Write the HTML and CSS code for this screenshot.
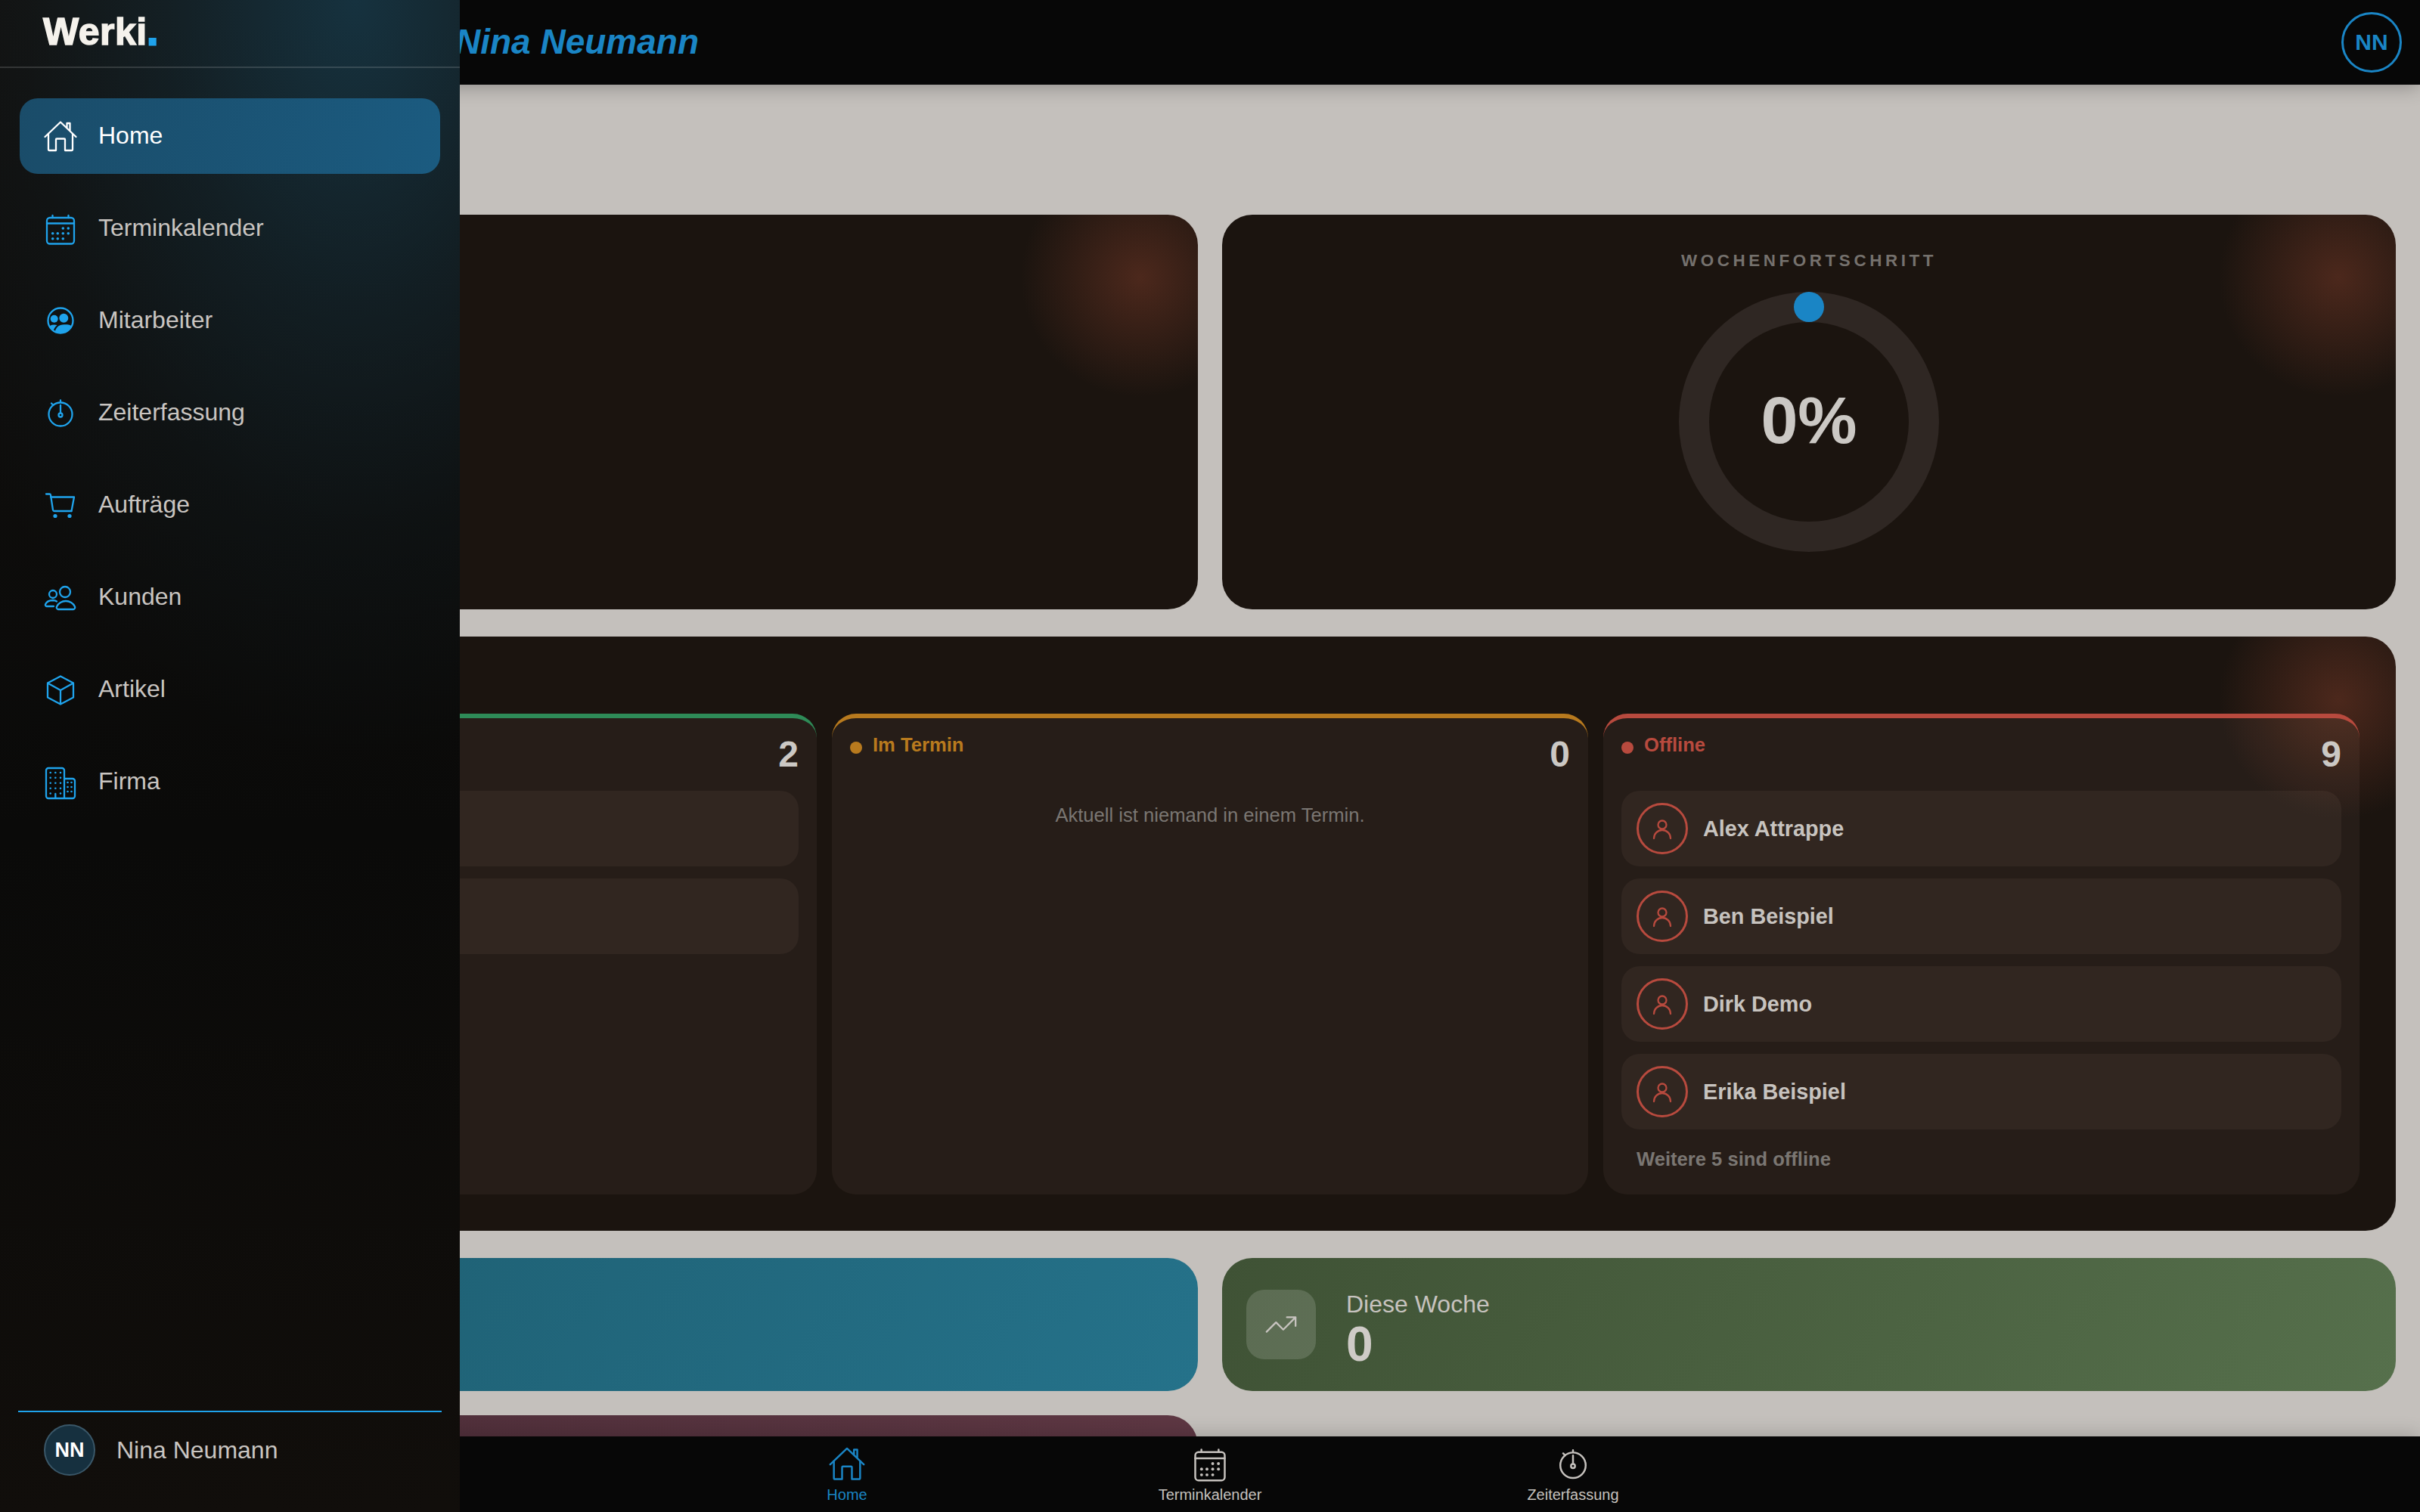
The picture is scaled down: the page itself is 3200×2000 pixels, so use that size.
FILE: index.html
```html
<!DOCTYPE html>
<html lang="de">
<head>
  <meta charset="UTF-8">
  <meta name="viewport" content="width=device-width, initial-scale=1.0">
  <title>Werki</title>
  <link rel="stylesheet" href="styles.css">
</head>
<body>
  <!-- Icons -->
  <svg class="icon-defs" aria-hidden="true">
    <symbol id="i-home" viewBox="0 0 48 48">
      <path d="M3.500 25 24 5.500 44.500 25M32.500 13.500V7h4v10"/>
      <path d="M8 21v20.500A1.500 1.500 0 0 0 9.500 43H18V28.500a1 1 0 0 1 1-1h10a1 1 0 0 1 1 1V43h8.500a1.500 1.500 0 0 0 1.500-1.500V21"/>
    </symbol>
    <symbol id="i-calendar" viewBox="0 0 48 48">
      <rect x="6" y="10" width="36" height="34.500" rx="4"/>
      <path d="M6 17.500h36M13.500 7v3M34.500 7v3"/>
      <g class="dots">
        <circle cx="27.300" cy="24" r="1.800"/><circle cx="34.300" cy="24" r="1.800"/>
        <circle cx="13.700" cy="30.700" r="1.800"/><circle cx="20.300" cy="30.700" r="1.800"/><circle cx="27.300" cy="30.700" r="1.800"/><circle cx="34.300" cy="30.700" r="1.800"/>
        <circle cx="13.700" cy="37.700" r="1.800"/><circle cx="20.300" cy="37.700" r="1.800"/><circle cx="27.300" cy="37.700" r="1.800"/>
      </g>
    </symbol>
    <symbol id="i-team" viewBox="0 0 48 48">
      <circle cx="24" cy="24" r="16.500"/>
      <g class="dots">
        <circle cx="15.700" cy="21.700" r="5"/><circle cx="28.300" cy="20.700" r="6"/>
        <path d="M9.800 31Q14 28.800 19.500 30 16 33 14.500 37A16 16 0 0 1 9.800 31Z"/>
        <path d="M17 38.500Q18 32 24 30 26 29.300 29 29.300H33Q36 29.300 38.500 31A16 16 0 0 1 17 38.500Z"/>
      </g>
    </symbol>
    <symbol id="i-watch" viewBox="0 0 48 48">
      <circle cx="24" cy="26" r="15.500"/>
      <path d="M24 10V7.500M12 11.500l2.500 2.500M24 14v10"/>
      <circle cx="24" cy="27" r="2.500"/>
    </symbol>
    <symbol id="i-cart" viewBox="0 0 48 48">
      <path d="M5 9.500h4.500a1.500 1.500 0 0 1 1.500 1.300L14 30.500a2 2 0 0 0 2 1.500h22.500"/>
      <path d="M11 13.500h31L38.500 32"/>
      <g class="dots"><circle cx="17" cy="38.500" r="2.600"/><circle cx="36" cy="38.500" r="2.600"/></g>
    </symbol>
    <symbol id="i-people" viewBox="0 0 48 48">
      <circle cx="14" cy="20" r="5"/>
      <circle cx="30" cy="17" r="7"/>
      <path d="M21 40h20a2.500 2.500 0 0 0 2-3.500C41 32 36 29 31 29s-10 3-12 7.500a2.500 2.500 0 0 0 2 3.500Z"/>
      <path d="M15 36H6a2 2 0 0 1-2-2.500C5.500 30 9 28 14 28a10 10 0 0 1 5 1.500"/>
    </symbol>
    <symbol id="i-box" viewBox="0 0 48 48">
      <path d="M24 6.500 41 15.500v19L24 43.500 7 34.500v-19ZM7 15.500 24 25l17-9.500M24 25v18.500"/>
    </symbol>
    <symbol id="i-company" viewBox="0 0 48 48">
      <path d="M29 46H8a3 3 0 0 1-3-3V9a3 3 0 0 1 3-3h18a3 3 0 0 1 3 3v37ZM29 20h11a3 3 0 0 1 3 3v20a3 3 0 0 1-3 3H29M17.300 46v-6"/>
      <g class="dots">
        <circle cx="10.700" cy="12" r="1.300"/><circle cx="17.300" cy="12" r="1.300"/><circle cx="24" cy="12" r="1.300"/>
        <circle cx="10.700" cy="18.700" r="1.300"/><circle cx="17.300" cy="18.700" r="1.300"/><circle cx="24" cy="18.700" r="1.300"/>
        <circle cx="10.700" cy="25.700" r="1.300"/><circle cx="17.300" cy="25.700" r="1.300"/><circle cx="24" cy="25.700" r="1.300"/>
        <circle cx="10.700" cy="32.700" r="1.300"/><circle cx="17.300" cy="32.700" r="1.300"/><circle cx="24" cy="32.700" r="1.300"/>
        <circle cx="10.700" cy="39.500" r="1.300"/><circle cx="24" cy="39.500" r="1.300"/>
        <circle cx="33.500" cy="25" r="1.300"/><circle cx="38.500" cy="25" r="1.300"/>
        <circle cx="33.500" cy="31" r="1.300"/><circle cx="38.500" cy="31" r="1.300"/>
        <circle cx="33.500" cy="37" r="1.300"/><circle cx="38.500" cy="37" r="1.300"/>
      </g>
    </symbol>
    <symbol id="i-person" viewBox="0 0 32 32">
      <circle cx="16" cy="11" r="5.500"/>
      <path d="M5 29c0-6.500 5-11 11-11s11 4.500 11 11"/>
    </symbol>
  </svg>

  <div class="app">
    <header class="topbar">
      <span class="greeting">Nina Neumann</span>
      <div class="topbar-avatar">NN</div>
    </header>

    <main class="content">
      <section class="grid-two">
        <div class="card card-hero"></div>
        <div class="card card-hero progress">
          <div class="progress-label">WOCHENFORTSCHRITT</div>
          <div class="ring">
            <svg viewBox="0 0 344 344" width="344" height="344">
              <circle class="ring-track" cx="172" cy="172" r="152"/>
              <circle class="ring-value" cx="172" cy="20" r="20"/>
            </svg>
            <div class="ring-text">0%</div>
          </div>
        </div>
      </section>

      <section class="card card-status">
        <div class="status-cols">
          <div class="status-col col-green">
            <div class="status-head">
              <span class="status-label"></span>
              <span class="status-count">2</span>
            </div>
            <div class="status-row"></div>
            <div class="status-row"></div>
          </div>

          <div class="status-col col-orange">
            <div class="status-head">
              <span class="status-label"><i class="dot"></i>Im Termin</span>
              <span class="status-count">0</span>
            </div>
            <p class="status-empty">Aktuell ist niemand in einem Termin.</p>
          </div>

          <div class="status-col col-red">
            <div class="status-head">
              <span class="status-label"><i class="dot"></i>Offline</span>
              <span class="status-count">9</span>
            </div>
            <div class="status-row">
              <div class="person-icon"><svg class="icon" width="32" height="32"><use href="#i-person"/></svg></div>
              Alex Attrappe
            </div>
            <div class="status-row">
              <div class="person-icon"><svg class="icon" width="32" height="32"><use href="#i-person"/></svg></div>
              Ben Beispiel
            </div>
            <div class="status-row">
              <div class="person-icon"><svg class="icon" width="32" height="32"><use href="#i-person"/></svg></div>
              Dirk Demo
            </div>
            <div class="status-row">
              <div class="person-icon"><svg class="icon" width="32" height="32"><use href="#i-person"/></svg></div>
              Erika Beispiel
            </div>
            <div class="status-more">Weitere 5 sind offline</div>
          </div>
        </div>
      </section>

      <section class="grid-two">
        <div class="stat stat-blue"></div>
        <div class="stat stat-green">
          <div class="stat-icon">
            <svg viewBox="0 0 24 24" width="46" height="46"><path d="M22 7l-8.500 8.500-5-5L2 17M16 7h6v6"/></svg>
          </div>
          <div class="stat-text">
            <div class="stat-label">Diese Woche</div>
            <div class="stat-value">0</div>
          </div>
        </div>
        <div class="stat stat-maroon"></div>
      </section>
    </main>

    <nav class="bottom-nav">
      <a class="bottom-item active"><svg class="icon" width="52" height="52"><use href="#i-home"/></svg>Home</a>
      <a class="bottom-item"><svg class="icon" width="52" height="52"><use href="#i-calendar"/></svg>Terminkalender</a>
      <a class="bottom-item"><svg class="icon" width="52" height="52"><use href="#i-watch"/></svg>Zeiterfassung</a>
    </nav>

    <aside class="sidebar">
      <div class="logo">Werki<span>.</span></div>
      <ul class="side-menu">
        <li class="side-item active"><svg class="icon" width="48" height="48"><use href="#i-home"/></svg>Home</li>
        <li class="side-item"><svg class="icon" width="48" height="48"><use href="#i-calendar"/></svg>Terminkalender</li>
        <li class="side-item"><svg class="icon" width="48" height="48"><use href="#i-team"/></svg>Mitarbeiter</li>
        <li class="side-item"><svg class="icon" width="48" height="48"><use href="#i-watch"/></svg>Zeiterfassung</li>
        <li class="side-item"><svg class="icon" width="48" height="48"><use href="#i-cart"/></svg>Aufträge</li>
        <li class="side-item"><svg class="icon" width="48" height="48"><use href="#i-people"/></svg>Kunden</li>
        <li class="side-item"><svg class="icon" width="48" height="48"><use href="#i-box"/></svg>Artikel</li>
        <li class="side-item"><svg class="icon" width="48" height="48"><use href="#i-company"/></svg>Firma</li>
      </ul>
      <div class="side-user">
        <div class="side-avatar">NN</div>
        <span>Nina Neumann</span>
      </div>
    </aside>
  </div>
</body>
</html>
```

FILE: styles.css
```css
/* Styles globaux */
body {
  margin: 0;
  font-family: "Liberation Sans", Arial, sans-serif;
  background-color: #c4c0bc;
  color: #c7c3bf;
}

.icon-defs {
  position: absolute;
  width: 0;
  height: 0;
}

.icon {
  flex: none;
  fill: none;
  stroke: currentColor;
  stroke-width: 2.3;
  stroke-linecap: round;
  stroke-linejoin: round;
}

.dots {
  fill: currentColor;
  stroke: none;
}

.app {
  position: relative;
  height: 100vh;
  overflow: hidden;
}

/* Topbar */
.topbar {
  position: relative;
  z-index: 2;
  display: flex;
  align-items: center;
  justify-content: space-between;
  height: 112px;
  box-sizing: border-box;
  padding: 0 24px 0 602px;
  background: #070707;
  box-shadow: 0 2px 24px rgba(0, 0, 0, 0.3);
}

.greeting {
  margin-bottom: 3px;
  font-size: 46px;
  font-weight: bold;
  font-style: italic;
  color: #1a85c5;
}

.topbar-avatar {
  display: flex;
  align-items: center;
  justify-content: center;
  width: 80px;
  height: 80px;
  box-sizing: border-box;
  border: 3px solid #1a85c5;
  border-radius: 50%;
  font-size: 30px;
  font-weight: bold;
  color: #1a85c5;
}

/* Contenu */
.content {
  display: flex;
  flex-direction: column;
  gap: 36px;
  padding: 172px 32px 0;
}

.grid-two {
  display: grid;
  grid-template-columns: 1fr 1fr;
  gap: 32px;
}

.card {
  border-radius: 40px;
  background:
    radial-gradient(circle 158px at calc(100% - 76px) 83px, #4c281c, rgba(76, 40, 28, 0)),
    #1b140f;
}

.card-hero {
  height: 522px;
}

.progress {
  display: flex;
  flex-direction: column;
  align-items: center;
  box-sizing: border-box;
  padding-top: 48px;
}

.progress-label {
  font-size: 22.4px;
  font-weight: bold;
  line-height: 26px;
  letter-spacing: 4.6px;
  color: #75716d;
}

.ring {
  position: relative;
  margin-top: 28px;
  width: 344px;
  height: 344px;
}

.ring svg {
  display: block;
}

.ring-track {
  fill: none;
  stroke: #2f2723;
  stroke-width: 40;
}

.ring-value {
  fill: #1a85c5;
}

.ring-text {
  position: absolute;
  inset: 0 0 4px;
  display: flex;
  align-items: center;
  justify-content: center;
  font-size: 88px;
  font-weight: bold;
  color: #cbc8c4;
}

/* Colonnes de statut */
.card-status {
  padding: 102px 48px 48px;
}

.status-cols {
  display: grid;
  grid-template-columns: repeat(3, 1fr);
  gap: 20px;
}

.status-col {
  padding: 20px 24px 32px;
  border-top: 6px solid;
  border-radius: 32px;
  background: rgba(255, 220, 200, 0.05);
}

.col-green { border-top-color: #2e8b57; }
.col-orange { border-top-color: #b87a1e; }
.col-red { border-top-color: #b84a3e; }

.status-head {
  display: flex;
  justify-content: space-between;
  align-items: flex-start;
  height: 55px;
  margin-bottom: 21px;
}

.status-label {
  display: flex;
  align-items: center;
  margin-top: 1px;
  font-size: 25.6px;
  font-weight: bold;
  line-height: 29px;
}

.col-orange .status-label { color: #b87a1e; }
.col-red .status-label { color: #b84a3e; }

.dot {
  width: 16px;
  height: 16px;
  margin: 6px 14px 0 0;
  border-radius: 50%;
  background: currentColor;
}

.status-count {
  font-size: 48px;
  font-weight: bold;
  line-height: 55px;
  color: #cbc8c4;
}

.status-row {
  display: flex;
  align-items: center;
  gap: 20px;
  height: 100px;
  box-sizing: border-box;
  margin-bottom: 16px;
  padding: 0 20px;
  border-radius: 24px;
  background: rgba(255, 220, 200, 0.05);
  font-size: 28.8px;
  font-weight: bold;
}

.person-icon {
  display: flex;
  align-items: center;
  justify-content: center;
  width: 68px;
  height: 68px;
  box-sizing: border-box;
  border: 3px solid #b84a3e;
  border-radius: 50%;
  color: #b84a3e;
}

.status-empty {
  margin: 0;
  padding-top: 18px;
  font-size: 25.6px;
  line-height: 29px;
  text-align: center;
  color: #7a7672;
}

.status-more {
  margin-top: 25px;
  padding-left: 20px;
  font-size: 25.6px;
  font-weight: bold;
  line-height: 29px;
  color: #7a7672;
}

/* Cartes chiffres */
.stat {
  display: flex;
  align-items: center;
  gap: 40px;
  height: 176px;
  box-sizing: border-box;
  padding: 0 32px;
  border-radius: 40px;
}

.stat-blue { background: linear-gradient(120deg, #1d5b6d, #25728a); }
.stat-green { background: linear-gradient(120deg, #3f5235, #56704c); }
.stat-maroon { background: linear-gradient(120deg, #4a2c37, #5f3844); }

.stat-icon {
  display: flex;
  align-items: center;
  justify-content: center;
  width: 92px;
  height: 92px;
  border-radius: 24px;
  background: rgba(255, 255, 255, 0.15);
}

.stat-icon path {
  fill: none;
  stroke: #c7c3bf;
  stroke-width: 1.2;
  stroke-linecap: round;
  stroke-linejoin: round;
}

.stat-text {
  padding-top: 12px;
}

.stat-label {
  margin-bottom: 2px;
  font-size: 32px;
  line-height: 37px;
}

.stat-value {
  font-size: 64px;
  font-weight: bold;
  line-height: 64px;
  color: #cfcbc7;
}

/* Navigation du bas */
.bottom-nav {
  position: absolute;
  z-index: 3;
  left: 0;
  right: 0;
  bottom: 0;
  display: flex;
  justify-content: center;
  height: 100px;
  background: #070707;
  box-shadow: 0 -2px 24px rgba(0, 0, 0, 0.2);
}

.bottom-item {
  display: flex;
  flex-direction: column;
  align-items: center;
  gap: 4px;
  width: 480px;
  padding-top: 10px;
  font-size: 20px;
  line-height: 23px;
  color: #c5c1bd;
}

.bottom-item.active {
  color: #1a85c5;
}

/* Menu latéral */
.sidebar {
  position: absolute;
  z-index: 4;
  top: 0;
  left: 0;
  bottom: 0;
  display: flex;
  flex-direction: column;
  width: 608px;
  background:
    radial-gradient(ellipse 620px 1000px at 470px 0,
      #16323f 0%,
      rgba(22, 50, 63, 0.45) 40%,
      rgba(22, 50, 63, 0.15) 70%,
      rgba(22, 50, 63, 0) 100%),
    linear-gradient(180deg, #12100e 0%, #0a0a09 55%, #110e0b 100%);
}

.logo {
  height: 90px;
  box-sizing: border-box;
  padding: 14px 0 0 57px;
  border-bottom: 2px solid rgba(255, 255, 255, 0.14);
  font-size: 50px;
  font-weight: bold;
  line-height: 57px;
  letter-spacing: 0.5px;
  color: #f5f2ec;
  -webkit-text-stroke: 1.5px #f5f2ec;
}

.logo span {
  color: #1fa3ec;
  -webkit-text-stroke: 3px #1fa3ec;
}

.side-menu {
  display: flex;
  flex-direction: column;
  gap: 22px;
  margin: 0;
  padding: 40px 26px;
  list-style: none;
}

.side-item {
  display: flex;
  align-items: center;
  gap: 26px;
  height: 100px;
  box-sizing: border-box;
  padding: 0 0 2px 30px;
  border-radius: 24px;
  font-size: 32px;
  color: #c9c5c1;
}

.side-item .icon {
  margin-top: 2px;
  color: #1fa3ec;
}

.side-item.active {
  background: linear-gradient(100deg, #1a4c69, #1b5b80);
  color: #fff;
}

.side-item.active .icon {
  color: #fff;
}

.side-user {
  display: flex;
  align-items: center;
  gap: 28px;
  margin: auto 24px 0;
  height: 134px;
  box-sizing: border-box;
  padding: 16px 34px 48px;
  border-top: 2px solid #1fa3ec;
  font-size: 32px;
  color: #c9c5c1;
}

.side-avatar {
  display: flex;
  align-items: center;
  justify-content: center;
  width: 68px;
  height: 68px;
  box-sizing: border-box;
  border: 2px solid #3a5768;
  border-radius: 50%;
  background: #16303f;
  font-size: 27px;
  font-weight: bold;
  color: #fff;
}
```
